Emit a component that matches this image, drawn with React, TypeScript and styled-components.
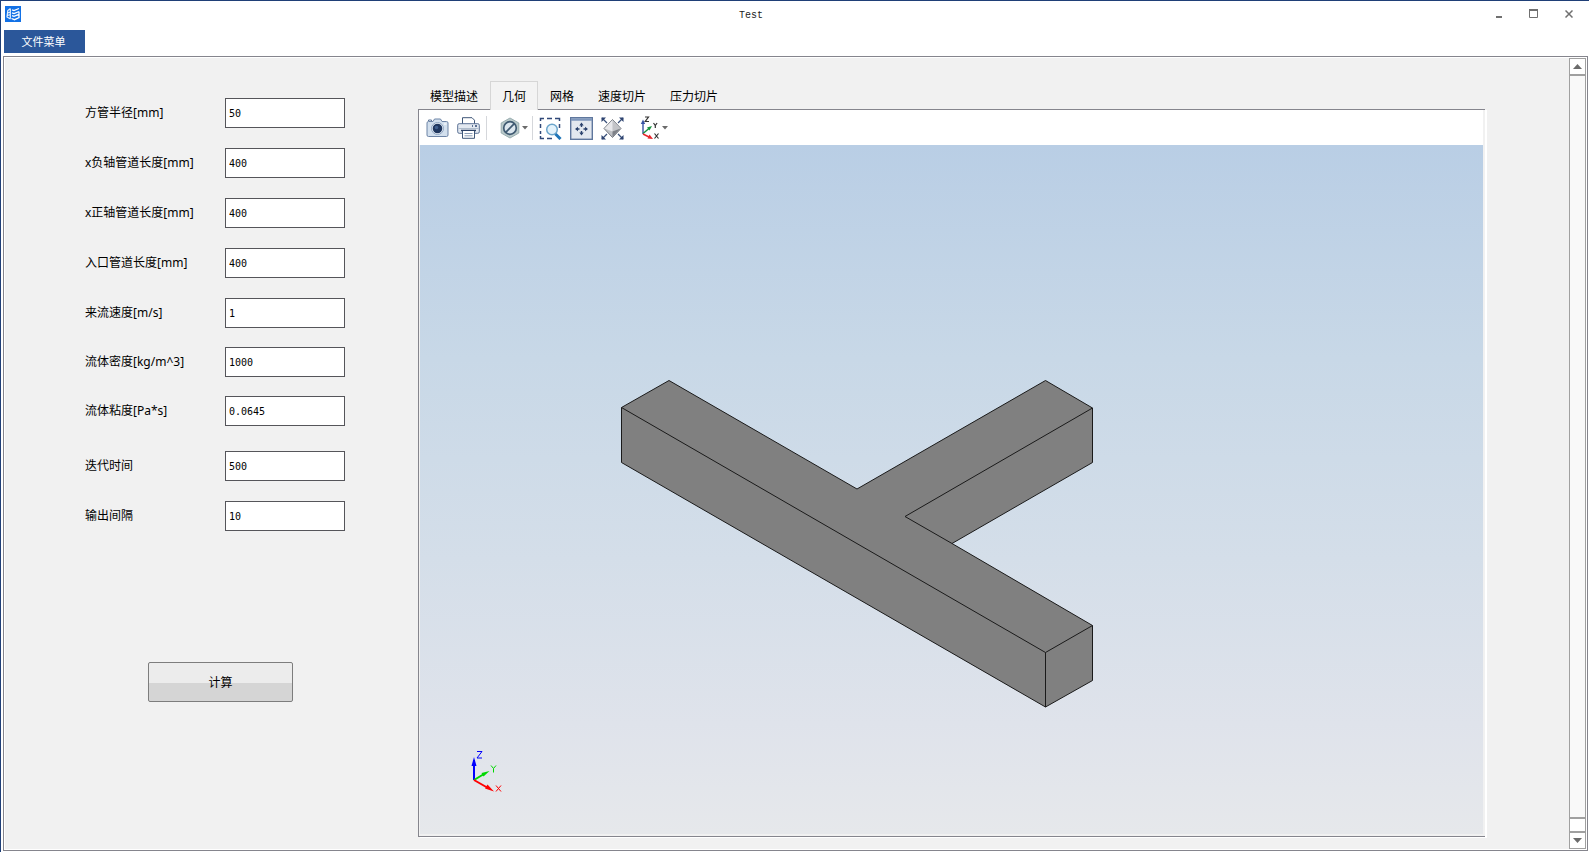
import React, { useState } from "react";
import styled, { createGlobalStyle } from "styled-components";

const cjk = '"Noto Sans", "Noto Sans CJK SC", sans-serif';
const mono = '"DejaVu Sans Mono", "Noto Sans CJK SC", monospace';

const GlobalStyle = createGlobalStyle`
  *, *::before, *::after { box-sizing: border-box; }
  body { margin: 0; background: #fff; font-family: ${cjk}; font-size: 12px; color: #000; }
  button { font: inherit; color: inherit; background: none; border: 0; padding: 0; }
  svg { display: block; }
`;

const Window = styled.div`
  display: flex;
  flex-direction: column;
  min-height: 100vh;
  padding: 0 1px 1px 2px;
  border-top: 1px solid #1f3f77;
  border-left: 1px solid #1f3f77;
`;

const TitleBar = styled.header`
  display: flex;
  align-items: center;
  height: 29px;
  padding: 0 2px;
`;

const AppMark = styled.span`
  height: 20px;
`;

const Title = styled.h1`
  flex: 1;
  margin: 0;
  font: 10px/16px "Liberation Mono", monospace;
  text-align: center;
  color: #222;
`;

const WindowButtons = styled.div`
  display: flex;
  height: 29px;
`;

const WindowButton = styled.button`
  display: flex;
  align-items: center;
  justify-content: center;
  width: 35px;
  height: 25px;
  color: #707070;
`;

const MenuBar = styled.nav`
  display: flex;
  height: 26px;
  padding-left: 1px;
`;

const MenuButton = styled.button`
  width: 81px;
  height: 23px;
  padding-right: 2px;
  line-height: 21px;
  font-size: 11px;
  color: #fff;
  background: #2b579a;
`;

const Workspace = styled.div`
  display: flex;
  flex: 1;
  border: 1px solid #85858d;
  outline: 1px solid #fff;
  outline-offset: -2px;
  padding: 1px 1px 1px 0;
  background: #f1f1f1;
`;

const Form = styled.form`
  display: flex;
  flex-direction: column;
  width: 414px;
  padding: 40px 0 40px 81px;
`;

const FieldGroup = styled.div<{ $above?: number; $gap?: number }>`
  display: flex;
  flex-direction: column;
  gap: ${(p) => p.$gap ?? 20}px;
  margin-top: ${(p) => p.$above ?? 0}px;
`;

const Field = styled.div`
  display: flex;
  align-items: center;
`;

const FieldLabel = styled.label`
  width: 140px;
  line-height: 18px;
`;

const FieldInput = styled.input`
  width: 120px;
  height: 30px;
  padding: 0 3px;
  border: 1px solid #55555a;
  border-radius: 0;
  background: #fff;
  color: #000;
  font: 10px ${mono};
`;

const ComputeButton = styled.button`
  width: 145px;
  height: 40px;
  margin: 131px 0 0 63px;
  border: 1px solid #7d7d7d;
  border-radius: 2px;
  background: linear-gradient(#ececec 0 52%, #d5d5d5 52%);
`;

const Viewer = styled.section`
  display: flex;
  flex-direction: column;
  flex: 1;
  min-width: 0;
  padding: 23px 84px 12px 0;
`;

const Tabs = styled.div`
  display: flex;
  height: 28px;
`;

const Tab = styled.button<{ $active: boolean }>`
  position: relative;
  z-index: ${(p) => (p.$active ? 1 : 0)};
  margin-bottom: ${(p) => (p.$active ? -1 : 0)}px;
  padding: ${(p) => (p.$active ? "0 11px" : "2px 12px 0")};
  border: solid #d6d6d6;
  border-width: ${(p) => (p.$active ? "1px 1px 0" : "0")};
  background: ${(p) => (p.$active ? "#f3f3f3" : "none")};
`;

const Frame = styled.div`
  display: flex;
  flex-direction: column;
  flex: 1;
  padding-bottom: 2px;
  border: solid #85858d;
  border-width: 1px 0 1px 1px;
  box-shadow: 2px 1px 0 #fff;
`;

const Toolbar = styled.div`
  display: flex;
  align-items: center;
  height: 35px;
  margin-right: 2px;
  padding: 1px 0 0 3px;
  background: #fff;
`;

const Tool = styled.button<{ $menu?: boolean }>`
  display: flex;
  align-items: center;
  justify-content: ${(p) => (p.$menu ? "flex-start" : "center")};
  gap: 2px;
  width: ${(p) => (p.$menu ? 34 : 31)}px;
  height: 29px;
  padding-left: ${(p) => (p.$menu ? 4 : 0)}px;
`;

const ToolGroup = styled.div`
  display: flex;
  margin-right: 8px;
`;

const Divider = styled.span<{ $after: number }>`
  width: 1px;
  height: 24px;
  margin: 0 ${(p) => p.$after}px 0 2px;
  background: #d5d7db;
`;

const Scene = styled.div`
  position: relative;
  flex: 1;
  min-height: 300px;
  margin: 0 2px 0 1px;
  background: linear-gradient(#b9cee5, #c8d8e7 31%, #d4dee9 60%, #dfe3eb 84%, #e6e8eb);
`;

const Model = styled.svg`
  position: absolute;
  inset: 0;
  width: 100%;
  height: 100%;
`;

const Triad = styled.svg`
  position: absolute;
  left: 48px;
  bottom: 39px;
`;

const ScrollBar = styled.div`
  display: flex;
  flex-direction: column;
  width: 17px;
  border: 1px solid #a0a0a0;
  background: #f9f9f9;
`;

const ScrollArrow = styled.button<{ $end?: boolean }>`
  display: flex;
  align-items: center;
  justify-content: center;
  height: ${(p) => (p.$end ? 15 : 17)}px;
  background: #fff;
  border: solid #a0a0a0;
  border-width: ${(p) => (p.$end ? "0" : "0 0 2px")};
`;

const ScrollThumb = styled.div`
  height: 16px;
  margin-top: auto;
  border: solid #a0a0a0;
  border-width: 2px 0;
  background: #fff;
`;

const Logo = () => (
  <svg width="16" height="16" viewBox="0 0 16 16">
    <rect width="16" height="16" fill="#1271e6" />
    <g fill="none" stroke="#fff">
      <path d="M5.500 2.500 2.800 4.500 2 11l3.500 2M2.800 7l2.700-1M2.500 9.500l2.700-1M5.300 3v9.500" strokeWidth="1.200" opacity=".9" />
      <path d="m7 3.800 2 .8 5-2.100M7 6.800l2 .8 5-2.100M7 9.600l2 .8 5-2.100M6.500 12.500l3 1.200 4.500-2V5.500" strokeWidth="1.300" />
    </g>
  </svg>
);

const Caret = () => (
  <svg width="6" height="4" viewBox="0 0 6 4"><path d="M0 0h6L3 3.500z" fill="#6b6b6b" /></svg>
);

const CameraIcon = () => (
  <svg width="23" height="20" viewBox="0 0 23 20">
    <path d="M1 5q0-1.500 1.500-1.500H7L8.500 1h6L16 3.500h4.500Q22 3.500 22 5v12q0 1.500-1.500 1.500h-18Q1 18.500 1 17z" fill="#d3e0ee" stroke="#6d84a6" />
    <path d="M2.500 3V2h3v1" fill="none" stroke="#5d7496" />
    <circle cx="11.500" cy="10.500" r="6" fill="#eef3f9" stroke="#8ea5c2" />
    <circle cx="11.500" cy="10.500" r="4.800" fill="#20375f" />
    <circle cx="10.500" cy="9.500" r="1.800" fill="#405f8e" />
    <path d="M18 6h2.500" stroke="#fff" />
  </svg>
);

const PrinterIcon = () => (
  <svg width="23" height="22" viewBox="0 0 23 22">
    <path d="M5.500 7V.700h9.500l2.500 2.500V7" fill="#fff" stroke="#3f5778" />
    <rect x=".7" y="6.700" width="21.600" height="9.600" rx="1.500" fill="#e3e9f1" stroke="#5a7194" />
    <path d="M1.500 11.500h20" stroke="#aebccc" />
    <path d="M15 9h1M18 9h2" stroke="#2f4a75" strokeWidth="1.400" />
    <path d="M4 13.500h15" stroke="#2c4165" strokeWidth="1.500" />
    <path d="M5.500 14v7.300h12V14" fill="#fff" stroke="#3f5778" />
    <path d="M7.500 16.500h8M7.500 18.800h8" stroke="#8b9db5" />
  </svg>
);

const ClipIcon = () => (
  <svg width="20" height="22" viewBox="0 0 20 22">
    <path d="m10 1 8.800 5v10L10 21l-8.800-5V6z" fill="#b9c9ca" stroke="#98adb0" />
    <circle cx="10" cy="11" r="6.300" fill="#dbe6ee" stroke="#3f5a72" strokeWidth="1.700" />
    <path d="M5.700 15.300 14.300 6.700" stroke="#3f5a72" strokeWidth="1.700" />
  </svg>
);

const ZoomWindowIcon = () => (
  <svg width="23" height="23" viewBox="0 0 23 23">
    <path d="M1.500 4V1.500H5M8 1.500h5M16 1.500h4.500V4M1.500 7v4M1.500 14v3M1.500 19v2.500H5M8 21.500h5M20.500 7v4" fill="none" stroke="#304878" strokeWidth="1.500" />
    <path d="m16 16.500 5.500 5.500" stroke="#1d74b8" strokeWidth="3" />
    <circle cx="13" cy="12.500" r="5.300" fill="#e3f2fb" stroke="#6ba5cb" strokeWidth="1.500" />
  </svg>
);

const FitIcon = () => (
  <svg width="23" height="23" viewBox="0 0 23 23">
    <rect x=".7" y=".7" width="21.600" height="21.600" fill="#e3e8ef" stroke="#5f779d" strokeWidth="1.400" />
    <path d="M1 2.500h21" stroke="#7f97bb" strokeWidth="2.500" />
    <path d="M11.500 7v3M11.500 14v3M6 12h3.500M13.500 12h3.500" stroke="#2b426d" strokeWidth="1.400" />
    <path d="m9.300 8.500 2.200-3 2.200 3zM9.300 15.500l2.200 3 2.200-3zM8 9.800 5 12l3 2.200zM15 9.800l3 2.200-3 2.200z" fill="#2b426d" />
  </svg>
);

const DiamondIcon = () => (
  <svg width="23" height="23" viewBox="0 0 23 23">
    <path d="m1 1 5 5M22 1l-5 5M1 22l5-5M22 22l-5-5" stroke="#3a5079" strokeWidth="1.300" />
    <path d="M.5.500H5L.500 5zM22.500.500V5L18 .500zM.5 22.500V18L5 22.500zM22.500 22.500H18l4.500-4.500z" fill="#2d4370" />
    <path d="m11.500 2.500 8.500 9-8.500 9-8.500-9z" fill="#bfc1c5" stroke="#777b83" />
    <path d="m11.500 3 8 8.500-8 3z" fill="#c3c4c8" />
    <path d="m11.500 3-8 8.500 8 3z" fill="#e8e8eb" />
    <path d="m11.500 14.500 8-3-8 8.500z" fill="#7d8087" />
  </svg>
);

const AxesIcon = () => (
  <svg width="20" height="24" viewBox="0 0 20 24">
    <path d="M3 18V7" stroke="#3852a4" strokeWidth="1.400" />
    <path d="M.8 8 3 3.500 5.200 8z" fill="#3852a4" />
    <path d="m3 17.500 6-5" stroke="#15923d" strokeWidth="1.500" />
    <path d="m7 11.500 5-1.500-2.500 4.500z" fill="#15923d" />
    <path d="m3 18 6 3" stroke="#e8252b" strokeWidth="1.500" />
    <path d="m9.500 18.500 3.500 4.500-5.500-.5z" fill="#e8252b" />
    <path d="M5 1h3.500L5.200 5.500H9M13.500 7l1.800 2.500 1.800-2.500M15.300 9.500V12M14.500 17.500l4 5M18.500 17.500l-4 5" fill="none" stroke="#333" strokeWidth="1.200" />
  </svg>
);

const fieldGroups: { above?: number; gap?: number; fields: [string, string][] }[] = [
  {
    fields: [
      ["方管半径[mm]", "50"],
      ["x负轴管道长度[mm]", "400"],
      ["x正轴管道长度[mm]", "400"],
      ["入口管道长度[mm]", "400"],
      ["来流速度[m/s]", "1"],
    ],
  },
  { above: 19, gap: 19, fields: [["流体密度[kg/m^3]", "1000"], ["流体粘度[Pa*s]", "0.0645"]] },
  { above: 25, fields: [["迭代时间", "500"], ["输出间隔", "10"]] },
];

const tabNames = ["模型描述", "几何", "网格", "速度切片", "压力切片"];

export default function App() {
  const [tab, setTab] = useState("几何");
  return (
    <>
      <GlobalStyle />
      <Window>
        <TitleBar>
          <AppMark><Logo /></AppMark>
          <Title>Test</Title>
          <WindowButtons>
            <WindowButton aria-label="最小化">
              <svg width="6" height="8"><path d="M0 7h6" stroke="currentColor" strokeWidth="2" /></svg>
            </WindowButton>
            <WindowButton aria-label="最大化">
              <svg width="9" height="9" fill="none" stroke="currentColor"><path d="M.5 1v7.500h8V1" /><path d="M0 1h9" strokeWidth="2" /></svg>
            </WindowButton>
            <WindowButton aria-label="关闭">
              <svg width="8" height="8"><path d="m.5.500 7 7m0-7-7 7" stroke="currentColor" strokeWidth="1.500" /></svg>
            </WindowButton>
          </WindowButtons>
        </TitleBar>
        <MenuBar>
          <MenuButton>文件菜单</MenuButton>
        </MenuBar>
        <Workspace>
          <Form onSubmit={(e) => e.preventDefault()}>
            {fieldGroups.map((group, g) => (
              <FieldGroup key={g} $above={group.above} $gap={group.gap}>
                {group.fields.map(([label, value], i) => (
                  <Field key={label}>
                    <FieldLabel htmlFor={`f${g}-${i}`}>{label}</FieldLabel>
                    <FieldInput id={`f${g}-${i}`} defaultValue={value} />
                  </Field>
                ))}
              </FieldGroup>
            ))}
            <ComputeButton type="submit">计算</ComputeButton>
          </Form>
          <Viewer>
            <Tabs role="tablist">
              {tabNames.map((name) => (
                <Tab key={name} role="tab" aria-selected={tab === name} $active={tab === name} onClick={() => setTab(name)}>
                  {name}
                </Tab>
              ))}
            </Tabs>
            <Frame>
              <Toolbar>
                <Tool aria-label="截图"><CameraIcon /></Tool>
                <Tool aria-label="打印"><PrinterIcon /></Tool>
                <Divider $after={9} />
                <Tool aria-label="剖切" $menu><ClipIcon /><Caret /></Tool>
                <Divider $after={2} />
                <ToolGroup>
                  <Tool aria-label="框选缩放"><ZoomWindowIcon /></Tool>
                  <Tool aria-label="适应窗口"><FitIcon /></Tool>
                  <Tool aria-label="缩放到全部"><DiamondIcon /></Tool>
                </ToolGroup>
                <Tool aria-label="视图方向" $menu><AxesIcon /><Caret /></Tool>
              </Toolbar>
              <Scene>
                <Model viewBox="420 145 1063 689" aria-label="T形方管">
                  <g stroke="#1a1a1a" strokeLinejoin="round">
                    <path d="M621.500 407.500 669 380.500 857 489 1045.500 380.500 1092.500 408V462.500L952 543.500 1092.500 625.500V680.500L1045.500 707 621.500 462.500z" fill="#808080" />
                    <path d="M621.500 407.500 1045.500 652.500V707M1045.500 652.500l47-27M1092.500 408 905 516.500l47 27" fill="none" />
                  </g>
                </Model>
                <Triad width="40" height="46" viewBox="468 749 40 46" fill="none">
                  <path d="M474 780v-20" stroke="#0000fe" strokeWidth="2" />
                  <path d="m474 757 2.500 9h-5z" fill="#0000fe" />
                  <path d="m474 780 10-6" stroke="#00d800" strokeWidth="2" />
                  <path d="m489.500 771-8 2 2 3.500z" fill="#00d800" />
                  <path d="m474 780 14 8" stroke="#fe0000" strokeWidth="2" />
                  <path d="m494 791.500-6.500-7-2.500 4z" fill="#fe0000" />
                  <path d="M477 751.500h5l-5 6.500h5" stroke="#0000fe" />
                  <path d="m491 765.500 2.500 3 2.500-3M493.500 768.500v4" stroke="#00d800" />
                  <path d="m496 785.500 5 6m0-6-5 6" stroke="#fe0000" />
                </Triad>
              </Scene>
            </Frame>
          </Viewer>
          <ScrollBar>
            <ScrollArrow aria-label="向上滚动">
              <svg width="9" height="5"><path d="M0 5h9L4.500 0z" fill="#6b6b6b" /></svg>
            </ScrollArrow>
            <ScrollThumb />
            <ScrollArrow aria-label="向下滚动" $end>
              <svg width="9" height="5"><path d="M0 0h9L4.500 5z" fill="#6b6b6b" /></svg>
            </ScrollArrow>
          </ScrollBar>
        </Workspace>
      </Window>
    </>
  );
}
